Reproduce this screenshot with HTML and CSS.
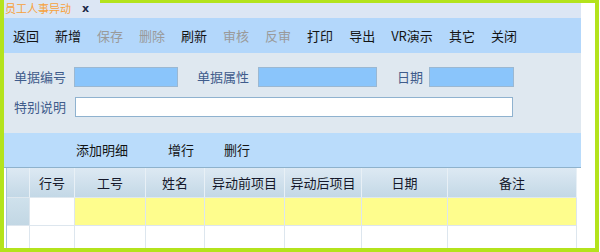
FILE: index.html
```html
<!DOCTYPE html>
<html lang="zh">
<head>
<meta charset="utf-8">
<title>员工人事异动</title>
<link rel="stylesheet" href="styles.css">
</head>
<body>
<div class="frame">
  <div class="tabrow">
    <div class="tab"><span class="tab-title">员工人事异动</span><span class="tab-close">x</span></div>
    <div class="tabrest"></div>
  </div>
  <div class="main">
    <div class="toolbar">
      <span class="tb">返回</span>
      <span class="tb">新增</span>
      <span class="tb dis">保存</span>
      <span class="tb dis">删除</span>
      <span class="tb">刷新</span>
      <span class="tb dis">审核</span>
      <span class="tb dis">反审</span>
      <span class="tb">打印</span>
      <span class="tb">导出</span>
      <span class="tb">VR演示</span>
      <span class="tb">其它</span>
      <span class="tb">关闭</span>
    </div>
    <div class="form">
      <div class="frow">
        <span class="lbl">单据编号</span>
        <span class="inp blue w1"></span>
        <span class="lbl l2">单据属性</span>
        <span class="inp blue w2"></span>
        <span class="lbl l3">日期</span>
        <span class="inp blue w3"></span>
      </div>
      <div class="frow">
        <span class="lbl">特别说明</span>
        <span class="inp white w4"></span>
      </div>
    </div>
    <div class="actions">
      <span class="act a1">添加明细</span>
      <span class="act a2">增行</span>
      <span class="act a3">删行</span>
    </div>
    <div class="gridwrap">
      <div class="grid">
        <div class="hd c0"></div>
        <div class="hd c1">行号</div>
        <div class="hd c2">工号</div>
        <div class="hd c3">姓名</div>
        <div class="hd c4">异动前项目</div>
        <div class="hd c5">异动后项目</div>
        <div class="hd c6">日期</div>
        <div class="hd c7">备注</div>

        <div class="cell rh sel"></div>
        <div class="cell"></div>
        <div class="cell y"></div>
        <div class="cell y"></div>
        <div class="cell y"></div>
        <div class="cell y"></div>
        <div class="cell y"></div>
        <div class="cell y"></div>

        <div class="cell rh r2"></div>
        <div class="cell r2"></div>
        <div class="cell r2"></div>
        <div class="cell r2"></div>
        <div class="cell r2"></div>
        <div class="cell r2"></div>
        <div class="cell r2"></div>
        <div class="cell r2"></div>
      </div>
    </div>
  </div>
</div>
</body>
</html>
```
FILE: styles.css
```css
* { box-sizing: border-box; }
html, body {
  margin: 0;
  padding: 0;
  background: #ffffff;
}
body {
  font-family: "Noto Sans CJK SC", "Noto Sans", sans-serif;
  font-size: 13px;
}
.frame {
  width: 599px;
  height: 252px;
  border-left: 4px solid #b4e31c;
  border-right: 4px solid #b4e31c;
  border-bottom: 4px solid #b4e31c;
  display: flex;
  flex-direction: column;
  overflow: hidden;
}
.tabrow {
  display: flex;
  height: 18px;
  flex: none;
}
.tab {
  width: 96px;
  background: #dce6f4;
  display: flex;
  align-items: flex-start;
  padding-left: 1px;
}
.tab-title {
  color: #f7a23c;
  font-size: 11px;
  line-height: 16px;
}
.tab-close {
  color: #1c2a48;
  font-family: "DejaVu Sans", sans-serif;
  font-size: 11px;
  font-weight: bold;
  line-height: 18px;
  margin-left: 11px;
}
.tabrest {
  flex: 1;
  border-top: 3px solid #b4e31c;
  background: linear-gradient(to right, #dce6f4 0, #dce6f4 calc(100% - 14px), #ffffff calc(100% - 14px));
}
.main {
  flex: 1;
  margin-right: 14px;
  display: flex;
  flex-direction: column;
  min-height: 0;
}
.toolbar {
  height: 35px;
  flex: none;
  background: #b3d7fb;
  display: flex;
  align-items: center;
  padding-left: 9px;
  gap: 16px;
  color: #141414;
}
.tb { line-height: 16px; }
.tb.dis { color: #9a9a9a; }
.form {
  height: 80px;
  flex: none;
  background: #dfe8f0;
  padding: 14px 0 0 10px;
  display: flex;
  flex-direction: column;
  gap: 10px;
}
.frow {
  display: flex;
  align-items: center;
  height: 20px;
}
.lbl {
  color: #3f5c8c;
  line-height: 16px;
}
.inp {
  display: block;
  height: 20px;
  border: 1px solid #9bb8d2;
}
.inp.blue { background: #8ac5fb; }
.inp.white { background: #ffffff; border-color: #8fb2cf; }
.w1 { width: 104px; margin-left: 8px; }
.l2 { margin-left: 19px; }
.w2 { width: 119px; margin-left: 9px; }
.l3 { margin-left: 20px; }
.w3 { width: 85px; margin-left: 6px; }
.w4 { width: 438px; margin-left: 9px; }
.actions {
  height: 35px;
  flex: none;
  background: #badcfb;
  border-bottom: 1px solid #8eb2cc;
  display: flex;
  align-items: center;
  padding-left: 72px;
  color: #141414;
}
.act { line-height: 16px; }
.a2 { margin-left: 40px; }
.a3 { margin-left: 30px; }
.gridwrap {
  flex: 1;
  padding-left: 2px;
  background: #ffffff;
  min-height: 0;
  overflow: hidden;
}
.grid {
  width: 571px;
  height: 100%;
  border-left: 1px solid #a6c4dc;
  display: grid;
  grid-template-columns: 23px 45px 71px 59px 80px 77px 86px 129px;
  grid-template-rows: 30px 28px 1fr;
}
.hd {
  background: linear-gradient(to bottom, #dde9f3, #c3d8e6);
  border-right: 1px solid #e8f0f6;
  border-bottom: 1px solid #dfe8ef;
  display: flex;
  align-items: center;
  justify-content: center;
  color: #15182a;
  line-height: 16px;
}
.cell {
  border-right: 1px solid #dde6ee;
  border-bottom: 1px solid #dde6ee;
  background: #ffffff;
}
.cell.y { background: #fefd8d; }
.cell.sel { background: linear-gradient(to bottom, #cfe1ec, #c2d7e4); }
.cell.r2 { border-bottom: none; }
```
